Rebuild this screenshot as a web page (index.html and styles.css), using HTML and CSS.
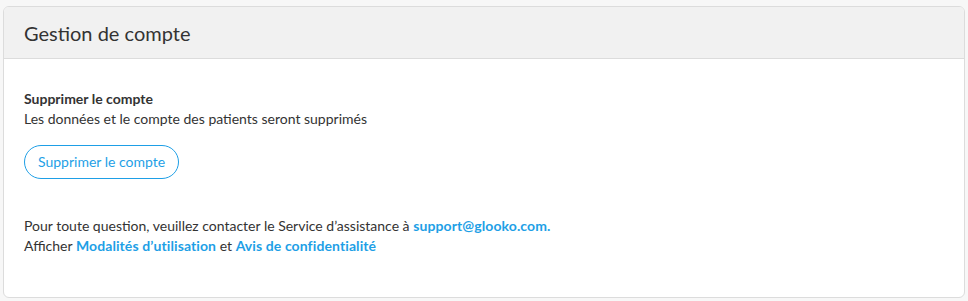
FILE: index.html
```html
<!DOCTYPE html>
<html lang="fr">
<head>
<meta charset="utf-8">
<title>Gestion de compte</title>
<link rel="stylesheet" href="styles.css">
</head>
<body>
<div class="page">
  <section class="card">
    <header class="card-header">
      <h2 class="card-title">Gestion de compte</h2>
    </header>
    <div class="card-body">
      <div class="section">
        <div class="label">Supprimer le compte</div>
        <div class="desc">Les données et le compte des patients seront supprimés</div>
        <button class="btn-outline" type="button">Supprimer le compte</button>
      </div>
      <div class="footer-text">
        <p>Pour toute question, veuillez contacter le Service d’assistance à <a class="link" href="#">support@glooko.com.</a></p>
        <p>Afficher <a class="link" href="#">Modalités d’utilisation</a> et <a class="link" href="#">Avis de confidentialité</a></p>
      </div>
    </div>
  </section>
</div>
</body>
</html>
```

FILE: styles.css
```css
html, body {
  margin: 0;
  padding: 0;
  background: #f7f7f7;
}
body {
  font-family: Lato, "Open Sans", "Liberation Sans", sans-serif;
  color: #333333;
}
.page {
  padding: 6px 3px 4px 3px;
}
.card {
  background: #ffffff;
  border: 1px solid #dcdcdc;
  border-radius: 6px;
  overflow: hidden;
}
.card-header {
  background: #f1f1f1;
  border-bottom: 1px solid #dcdcdc;
  height: 51px;
  padding: 0 20px;
  display: flex;
  align-items: center;
}
.card-title {
  margin: 0;
  font-size: 20px;
  font-weight: 400;
  line-height: 24px;
  color: #333333;
}
.card-body {
  padding: 30px 20px 41px 20px;
}
.section {
  display: flex;
  flex-direction: column;
  align-items: flex-start;
}
.label {
  font-size: 14px;
  font-weight: 700;
  line-height: 20px;
}
.desc {
  font-size: 14px;
  line-height: 20px;
}
.btn-outline {
  margin-top: 16px;
  height: 34px;
  padding: 0 13px;
  border: 1px solid #1e9fe6;
  border-radius: 17px;
  background: #ffffff;
  color: #1e9fe6;
  font-family: inherit;
  font-size: 14px;
  line-height: 20px;
  cursor: pointer;
}
.footer-text {
  margin-top: 37px;
  font-size: 14px;
  line-height: 20px;
}
.footer-text p {
  margin: 0;
}
.link {
  color: #1e9fe6;
  font-weight: 700;
  letter-spacing: 0.1px;
  text-decoration: none;
}
```
